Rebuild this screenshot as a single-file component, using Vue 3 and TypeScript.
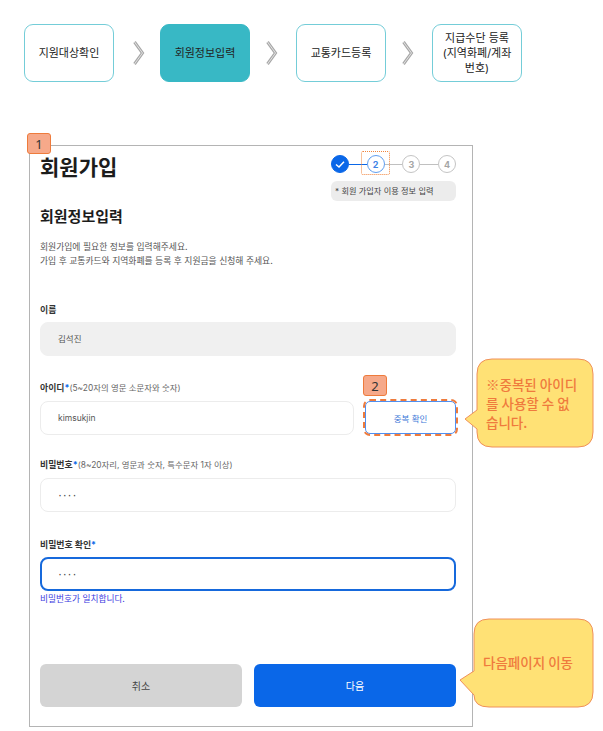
<script setup lang="ts">
interface Step { label: string; active?: boolean }
const steps: Step[] = [
  { label: '지원대상확인' },
  { label: '회원정보입력', active: true },
  { label: '교통카드등록' },
  { label: '지급수단 등록 (지역화폐/계좌 번호)' },
]
</script>

<template>
  <div class="page">
    <div class="flow">
      <template v-for="(s, i) in steps" :key="s.label">
        <div class="flow-card" :class="{ active: s.active }">{{ s.label }}</div>
        <svg v-if="i < steps.length - 1" class="chev" :class="{ first: i === 0 }" viewBox="0 0 46 32" width="46" height="32">
          <path d="M17.5 5 L25.5 16 L17.5 27" fill="none" stroke="#a8a8a8" stroke-width="3" />
          <path d="M17.5 5 L25.5 16 L17.5 27" fill="none" stroke="#e2e2e2" stroke-width="1" />
        </svg>
      </template>
    </div>

    <section class="panel">
      <span class="tag tag-1">1</span>
      <header class="head">
        <h1>회원가입</h1>
        <div class="status">
          <div class="stepper">
            <span class="dot done">
              <svg viewBox="0 0 18 18" width="18" height="18"><path d="M5 9.5 L8 12 L13 6.8" fill="none" stroke="#fff" stroke-width="1.5" /></svg>
            </span>
            <i class="line blue"></i>
            <span class="dot current">2<b class="dash"></b></span>
            <i class="line"></i>
            <span class="dot">3</span>
            <i class="line"></i>
            <span class="dot">4</span>
          </div>
          <div class="note">* 회원 가입자 이용 정보 입력</div>
        </div>
      </header>

      <h2>회원정보입력</h2>
      <p class="desc">회원가입에 필요한 정보를 입력해주세요.<br />가입 후 교통카드와 지역화폐를 등록 후 지원금을 신청해 주세요.</p>

      <div class="field name-field">
        <div class="label">이름</div>
        <div class="input filled">김석진</div>
      </div>

      <div class="field id-field">
        <div class="label">아이디<em>*</em><small>(5~20자의 영문 소문자와 숫자)</small></div>
        <div class="id-row">
          <div class="input grow">kimsukjin</div>
          <button class="check">중복 확인
            <span class="tag tag-2">2</span>
          </button>
        </div>
      </div>

      <div class="field pw-field">
        <div class="label">비밀번호<em>*</em><small>(8~20자리, 영문과 숫자, 특수문자 1자 이상)</small></div>
        <div class="input pw">····</div>
      </div>

      <div class="field confirm-field">
        <div class="label">비밀번호 확인<em>*</em></div>
        <div class="input pw focus">····</div>
        <div class="ok">비밀번호가 일치합니다.</div>
      </div>

      <div class="actions">
        <button class="btn cancel">취소</button>
        <button class="btn next">다음</button>
      </div>
    </section>

    <div class="callout c1">
      <svg viewBox="0 0 130 90" width="130" height="90">
        <path d="M28 1 H114 Q129 1 129 16 V74 Q129 89 114 89 H28 Q13 89 13 74 V71 L1 61 L13 52 V16 Q13 1 28 1 Z" fill="#ffe175" stroke="#f0905a" stroke-width="1" />
      </svg>
      <p>※중복된 아이디<br />를 사용할 수 없<br />습니다.</p>
    </div>
    <div class="callout c2">
      <svg viewBox="0 0 135 90" width="135" height="90">
        <path d="M30 1 H119 Q134 1 134 16 V74 Q134 89 119 89 H30 Q15 89 15 77 L1 62 L15 53 V16 Q15 1 30 1 Z" fill="#ffe175" stroke="#f0905a" stroke-width="1" />
      </svg>
      <p>다음페이지 이동</p>
    </div>
  </div>
</template>

<style>
html, body { margin: 0; background: #fff; }
</style>

<style scoped>
.page {
  position: relative;
  width: 603px;
  height: 731px;
  overflow: hidden;
  background: #fff;
  color: #222;
  font-family: Inter, "Noto Sans CJK KR", "Noto Sans", sans-serif;
}
.flow {
  display: flex;
  align-items: center;
  padding: 24px 0 0 24px;
}
.flow-card {
  box-sizing: border-box;
  width: 90px;
  height: 58px;
  padding: 0 6px;
  display: flex;
  align-items: center;
  justify-content: center;
  text-align: center;
  font-size: 11px;
  line-height: 15px;
  border: 1px solid #74cdd8;
  border-radius: 9px;
  color: #222;
  word-break: keep-all;
}
.flow-card.active {
  background: #38b8c5;
  border-color: #38b8c5;
}
.chev { flex: none; }
.chev.first { margin-left: 3px; margin-right: -3px; }
.panel {
  position: relative;
  box-sizing: border-box;
  width: 444px;
  height: 582px;
  margin: 63px 0 0 29px;
  padding: 0 16px 0 10px;
  border: 1.5px solid #b4b4b4;
  display: flex;
  flex-direction: column;
}
.tag {
  position: absolute;
  box-sizing: border-box;
  width: 24px;
  height: 21px;
  display: flex;
  align-items: center;
  justify-content: center;
  background: #f6a98a;
  border: 1px solid #ee7b3c;
  border-radius: 3px;
  font-size: 13px;
  color: #333;
  font-family: "Noto Sans", sans-serif;
}
.tag-1 { left: -3px; top: -13px; }
.tag-2 { left: -3px; top: -27px; }
.head {
  display: flex;
  justify-content: space-between;
  align-items: flex-start;
  height: 55px;
}
h1 {
  margin: 7px 0 0;
  font-size: 21px;
  line-height: 30px;
  font-weight: 700;
  color: #1c1c1c;
}
.status { width: 125px; padding-top: 8px; }
.stepper { display: flex; align-items: center; height: 20px; }
.dot {
  position: relative;
  box-sizing: border-box;
  flex: none;
  width: 18px;
  height: 18px;
  border-radius: 50%;
  border: 1px solid #c4c4c4;
  display: flex;
  align-items: center;
  justify-content: center;
  font-size: 9px;
  font-weight: 700;
  color: #a5a5a5;
  background: #fff;
}
.dot.done { background: #0a67e8; border-color: #0a67e8; }
.dot.done svg { position: absolute; left: -1px; top: -1px; }
.dot.current { border: 1.5px solid #5f9ef0; color: #3f83e6; }
.dash {
  position: absolute;
  box-sizing: border-box;
  left: -6.5px;
  top: -5.5px;
  width: 29px;
  height: 24px;
  border: 1.5px dotted #f0853f;
  border-radius: 2px;
}
.line { flex: 1; height: 1px; background: #c0c0c0; }
.line.blue { background: #0a67e8; }
.note {
  box-sizing: border-box;
  height: 20px;
  margin-top: 7px;
  padding-left: 4px;
  background: #ececec;
  border-radius: 6px;
  font-size: 8.2px;
  line-height: 20px;
  color: #444;
  white-space: nowrap;
}
h2 {
  margin: 4px 0 0;
  font-size: 15px;
  line-height: 24px;
  font-weight: 700;
  color: #1c1c1c;
}
.desc {
  margin: 11px 0 0;
  font-size: 8.8px;
  line-height: 14px;
  color: #555;
}
.field { display: flex; flex-direction: column; }
.name-field { margin-top: 35px; }
.id-field { margin-top: 25px; }
.pw-field { margin-top: 23px; }
.confirm-field { margin-top: 26px; }
.label {
  font-size: 8.9px;
  line-height: 13px;
  font-weight: 700;
  color: #333;
  margin-bottom: 6px;
}
.label em { font-style: normal; color: #0a67e8; }
.label small { font-size: 8.4px; font-weight: 400; color: #666; }
.input {
  box-sizing: border-box;
  height: 34px;
  padding-left: 17px;
  border: 1px solid #ececec;
  border-radius: 8px;
  background: #fff;
  font-size: 8.5px;
  line-height: 32px;
  color: #555;
}
.input.filled { background: #f0f0f0; border-color: #f0f0f0; }
.input.pw { font-size: 12px; letter-spacing: 0.8px; color: #444; font-family: "Liberation Sans", sans-serif; }
.input.focus { border: 2px solid #1669dc; line-height: 30px; padding-left: 16px; }
.id-row { display: flex; gap: 11px; }
.grow { flex: 1; }
.check {
  position: relative;
  box-sizing: border-box;
  width: 91px;
  height: 33px;
  background: #fff;
  border: 1.5px solid #4f8ff0;
  border-radius: 5px;
  outline: 2px dashed #ee7b3c;
  outline-offset: 0;
  font: inherit;
  font-size: 8.5px;
  color: #3c78d8;
  padding: 0;
}
.ok {
  margin-top: 2px;
  font-size: 8.7px;
  line-height: 13px;
  color: #3b3be0;
}
.actions {
  display: flex;
  gap: 12px;
  margin-top: auto;
  margin-bottom: 19px;
}
.btn {
  flex: 1;
  height: 43px;
  border: 0;
  border-radius: 6px;
  font: inherit;
  font-size: 10px;
  padding: 0;
}
.cancel { background: #d4d4d4; color: #444; }
.next { background: #0a67e8; color: #fff; }
.callout { position: absolute; }
.callout svg { display: block; }
.callout p {
  position: absolute;
  margin: 0;
  color: #ef7a3d;
  font-family: "Noto Sans CJK KR", sans-serif;
  font-size: 13.5px;
  line-height: 19px;
  font-weight: 500;
  white-space: nowrap;
}
.c1 { left: 464px; top: 358px; }
.c1 p { left: 22px; top: 17px; }
.c2 { left: 459px; top: 618px; }
.c2 p { left: 24px; top: 35px; }
</style>
